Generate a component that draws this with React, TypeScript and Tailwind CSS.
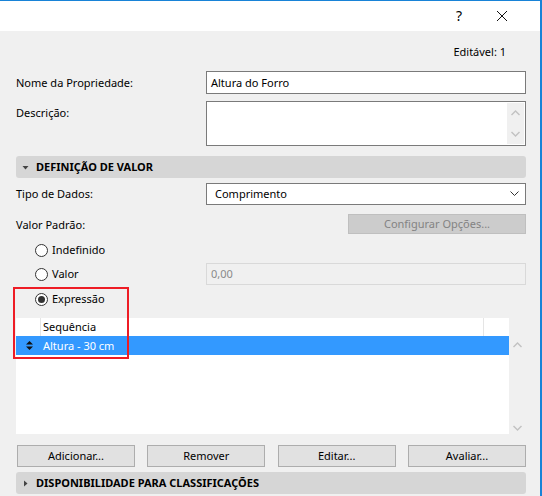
import React from 'react';

const font = { fontFamily: '"Noto Sans", "Open Sans", sans-serif' };

function ChevronUp() {
  return (
    <svg width="9" height="6" viewBox="0 0 9 6">
      <polyline points="0.5,5 4.5,1 8.5,5" fill="none" stroke="#c2c2c2" strokeWidth="1.4" />
    </svg>
  );
}

function ChevronDown() {
  return (
    <svg width="9" height="6" viewBox="0 0 9 6">
      <polyline points="0.5,1 4.5,5 8.5,1" fill="none" stroke="#c2c2c2" strokeWidth="1.4" />
    </svg>
  );
}

function Radio({ checked, label }: { checked?: boolean; label: string }) {
  return (
    <div className="flex h-[16px] items-center gap-[4px]">
      <span className="flex h-[13px] w-[13px] items-center justify-center rounded-full border border-[#333333] bg-white">
        {checked && <span className="h-[7px] w-[7px] rounded-full bg-[#333333]" />}
      </span>
      <span className="text-black">{label}</span>
    </div>
  );
}

function SectionHeader({ open, title }: { open?: boolean; title: string }) {
  return (
    <div className="flex h-[22px] w-[510px] items-center gap-[7px] rounded-[3px] bg-[#d6d6d6] pl-[6px]">
      <svg width="7" height="7" viewBox="0 0 7 7">
        {open ? <polygon points="0.5,2 6.5,2 3.5,5.5" fill="#444" /> : <polygon points="2,0.5 5.5,3.5 2,6.5" fill="#444" />}
      </svg>
      <span className="font-bold text-black">{title}</span>
    </div>
  );
}

function Button({ label }: { label: string }) {
  return (
    <button className="h-[22px] w-[118px] border border-[#adadad] bg-[#e1e1e1] text-[11px] leading-[16px] text-black">
      {label}
    </button>
  );
}

export default function App() {
  return (
    <div className="h-[496px] w-[542px] bg-white text-[11px] leading-[16px]" style={font}>
      <div className="relative flex h-[496px] w-[542px] flex-col border-t border-r-2 border-[#1883d7] bg-[#f0f0f0]">
        {/* title bar */}
        <div className="flex h-[30px] shrink-0 items-center justify-end bg-white pr-[32px]">
          <span className="mr-[34px] text-[14px] text-black">?</span>
          <svg width="12" height="12" viewBox="0 0 12 12">
            <path d="M1 1L11 11M11 1L1 11" stroke="#111" strokeWidth="1" />
          </svg>
        </div>

        <div className="flex flex-col pl-[16px] pr-[14px]">
          <div className="mt-[13px] mr-[20px] h-[16px] text-right text-black">Editável: 1</div>

          <div className="mt-[11px] flex h-[23px] items-center">
            <span className="w-[190px] text-black">Nome da Propriedade:</span>
            <div className="flex h-[23px] w-[320px] items-center border border-[#7a7a7a] bg-white pl-[4px] text-black">
              Altura do Forro
            </div>
          </div>

          <div className="mt-[7px] flex h-[45px] items-start">
            <span className="mt-[4px] w-[190px] text-black">Descrição:</span>
            <div className="flex h-[45px] w-[320px] justify-end border border-[#7a7a7a] bg-white p-[1px]">
              <div className="flex w-[17px] flex-col items-center justify-between bg-[#f0f0f0] py-[7px]">
                <ChevronUp />
                <ChevronDown />
              </div>
            </div>
          </div>

          <div className="mt-[10px]">
            <SectionHeader open title="DEFINIÇÃO DE VALOR" />
          </div>

          <div className="mt-[5px] flex h-[22px] items-center">
            <span className="w-[190px] text-black">Tipo de Dados:</span>
            <div className="flex h-[22px] w-[320px] items-center justify-between border border-[#7a7a7a] bg-white pl-[8px] pr-[6px] text-black">
              <span>Comprimento</span>
              <svg width="9" height="6" viewBox="0 0 9 6">
                <polyline points="0.5,0.5 4.5,4.5 8.5,0.5" fill="none" stroke="#333" strokeWidth="1" />
              </svg>
            </div>
          </div>

          <div className="mt-[9px] flex h-[20px] items-center justify-between">
            <span className="mt-[2px] text-black">Valor Padrão:</span>
            <div className="flex h-[20px] w-[178px] items-center justify-center border border-[#bfbfbf] bg-[#cccccc] text-[#838383]">
              Configurar Opções...
            </div>
          </div>

          <div className="mt-[8px] pl-[19px]">
            <Radio label="Indefinido" />
          </div>

          <div className="mt-[5px] flex h-[22px] items-center">
            <div className="w-[190px] pl-[19px]">
              <Radio label="Valor" />
            </div>
            <div className="flex h-[22px] w-[320px] items-center border border-[#d9d9d9] bg-[#f0f0f0] pl-[4px] text-[#8a8a8a]">
              0,00
            </div>
          </div>

          <div className="mt-[6px] pl-[19px]">
            <Radio checked label="Expressão" />
          </div>

          {/* expression list */}
          <div className="mt-[11px] flex h-[116px] w-[510px]">
            <div className="flex flex-1 flex-col bg-white">
              <div className="flex h-[18px] items-center">
                <div className="h-full w-[25px] border-r border-[#e5e5e5]" />
                <span className="flex-1 pl-[2px] text-black">Sequência</span>
                <div className="h-full w-[26px] border-l border-[#e5e5e5]" />
              </div>
              <div className="flex h-[19px] items-center bg-[#3399ff]">
                <div className="flex w-[27px] justify-center">
                  <svg width="7" height="9" viewBox="0 0 7 9">
                    <polygon points="3.5,0 7,3.5 0,3.5" fill="#111" />
                    <polygon points="0,5.5 7,5.5 3.5,9" fill="#111" />
                  </svg>
                </div>
                <span className="text-white">Altura - 30 cm</span>
              </div>
            </div>
            <div className="flex w-[17px] flex-col items-center justify-between pt-[24px] pb-[3px]">
              <ChevronUp />
              <ChevronDown />
            </div>
          </div>

          <div className="mt-[11px] flex justify-between pl-[1px]">
            <Button label="Adicionar..." />
            <Button label="Remover" />
            <Button label="Editar..." />
            <Button label="Avaliar..." />
          </div>

          <div className="mt-[5px]">
            <SectionHeader title="DISPONIBILIDADE PARA CLASSIFICAÇÕES" />
          </div>
        </div>

        {/* highlight frame */}
        <div className="pointer-events-none absolute left-[13px] top-[286px] h-[72px] w-[116px] border-2 border-[#ee1c25]" />
      </div>
    </div>
  );
}
